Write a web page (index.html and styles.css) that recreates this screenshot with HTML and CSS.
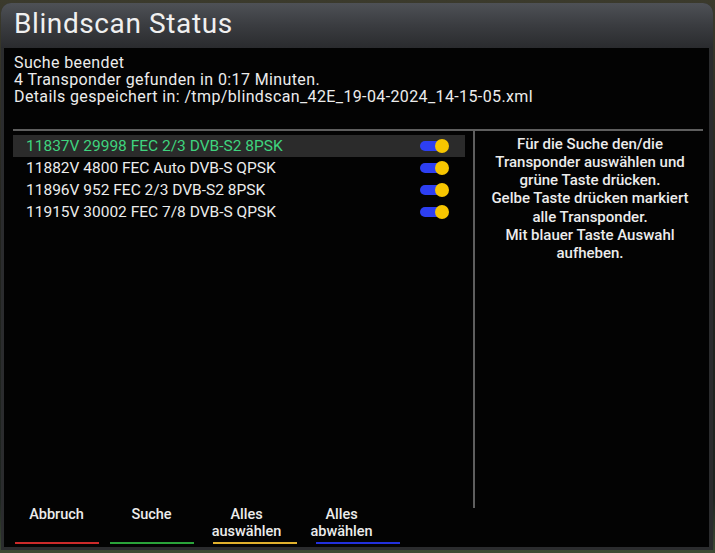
FILE: index.html
```html
<!DOCTYPE html>
<html lang="de">
<head>
<meta charset="utf-8">
<title>Blindscan Status</title>
<link rel="stylesheet" href="styles.css">
</head>
<body>
<div class="window">
  <div class="header"><h1 class="title">Blindscan Status</h1></div>
  <div class="content">
    <div class="info">
      <div>Suche beendet</div>
      <div>4 Transponder gefunden in 0:17 Minuten.</div>
      <div>Details gespeichert in: /tmp/blindscan_42E_19-04-2024_14-15-05.xml</div>
    </div>
    <div class="rule"></div>
    <div class="main">
      <div class="list">
        <div class="row selected"><span class="label">11837V 29998 FEC 2/3 DVB-S2 8PSK</span><span class="toggle"><span class="pill"></span><span class="knob"></span></span></div>
        <div class="row"><span class="label">11882V 4800 FEC Auto DVB-S QPSK</span><span class="toggle"><span class="pill"></span><span class="knob"></span></span></div>
        <div class="row"><span class="label">11896V 952 FEC 2/3 DVB-S2 8PSK</span><span class="toggle"><span class="pill"></span><span class="knob"></span></span></div>
        <div class="row"><span class="label">11915V 30002 FEC 7/8 DVB-S QPSK</span><span class="toggle"><span class="pill"></span><span class="knob"></span></span></div>
      </div>
      <div class="divider"></div>
      <div class="help">Für die Suche den/die<br>Transponder auswählen und<br>grüne Taste drücken.<br>Gelbe Taste drücken markiert<br>alle Transponder.<br>Mit blauer Taste Auswahl<br>aufheben.</div>
    </div>
    <div class="footer">
      <div class="labels">
        <div class="btn">Abbruch</div>
        <div class="btn">Suche</div>
        <div class="btn">Alles<br>auswählen</div>
        <div class="btn">Alles<br>abwählen</div>
      </div>
      <div class="lines">
        <div class="line red"></div>
        <div class="line green"></div>
        <div class="line yellow"></div>
        <div class="line blue"></div>
      </div>
    </div>
  </div>
</div>
</body>
</html>
```

FILE: styles.css
```css
html, body {
  margin: 0;
  padding: 0;
}
body {
  width: 715px;
  height: 553px;
  overflow: hidden;
  background: linear-gradient(180deg, #3b3a2c 0%, #22231e 40%, #1e2420 90%, #3d4a34 100%);
  font-family: Roboto, "Liberation Sans", sans-serif;
  color: #ececec;
}
.window {
  margin: 3px 2px 0 1px;
  height: 547px;
  box-sizing: border-box;
  border-radius: 10px 10px 0 0;
  background: #2b2c2e;
  padding: 0 4px 3px 3px;
  display: flex;
  flex-direction: column;
}
.header {
  height: 45px;
  flex: none;
  margin: 0 -4px 0 -3px;
  border-radius: 10px 10px 0 0;
  background: linear-gradient(180deg, #4e5156 0%, #3a3c40 50%, #2a2b2e 100%);
  padding-left: 13px;
  box-sizing: border-box;
}
.title {
  margin: 0;
  font-weight: 400;
  font-size: 28px;
  letter-spacing: 0.6px;
  line-height: 42px;
  color: #f0f0f0;
}
.content {
  flex: 1;
  min-height: 0;
  background: #030303;
  display: flex;
  flex-direction: column;
  padding: 6px 4px 0 9px;
}
.info {
  font-size: 16px;
  letter-spacing: 0.38px;
  line-height: 17px;
  padding-left: 1px;
  height: 51px;
  flex: none;
}
.rule {
  flex: none;
  margin-top: 23.5px;
  height: 2px;
  background: #5e5e5e;
  margin-right: 2px;
}
.main {
  display: flex;
  flex: 1;
  min-height: 0;
}
.list {
  width: 452px;
  padding-top: 4px;
}
.row {
  height: 22px;
  display: flex;
  align-items: center;
  justify-content: space-between;
  padding: 0 16px 0 13px;
  font-size: 15.5px;
}
.row.selected {
  background: #2b2b2b;
  color: #3fd37e;
}
.toggle {
  position: relative;
  width: 29px;
  height: 14px;
  display: flex;
  align-items: center;
}
.pill {
  width: 24px;
  height: 10px;
  border-radius: 5px;
  background: #2d3ff2;
}
.knob {
  position: absolute;
  right: 0;
  top: 0;
  width: 14px;
  height: 14px;
  border-radius: 50%;
  background: #f7c600;
}
.divider {
  width: 2px;
  margin-left: 8px;
  background: #5e5e5e;
}
.help {
  flex: 1;
  text-align: center;
  font-size: 15px;
  font-weight: 500;
  line-height: 18.3px;
  padding-top: 4px;
}
.footer {
  flex: none;
  height: 39px;
  display: flex;
  flex-direction: column;
}
.labels {
  display: flex;
  font-size: 14.5px;
  line-height: 17px;
  font-weight: 500;
  margin: -2px 0 0 -4px;
  height: 34px;
}
.btn {
  width: 95px;
  text-align: center;
}
.lines {
  display: flex;
  margin-top: 2px;
  padding-left: 2px;
}
.line {
  height: 2px;
  width: 84px;
}
.red { background: #cc2a2a; }
.green { background: #2aa43a; margin-left: 11px; }
.yellow { background: #e0b02c; margin-left: 19px; }
.blue { background: #2230dd; margin-left: 19px; }
```
